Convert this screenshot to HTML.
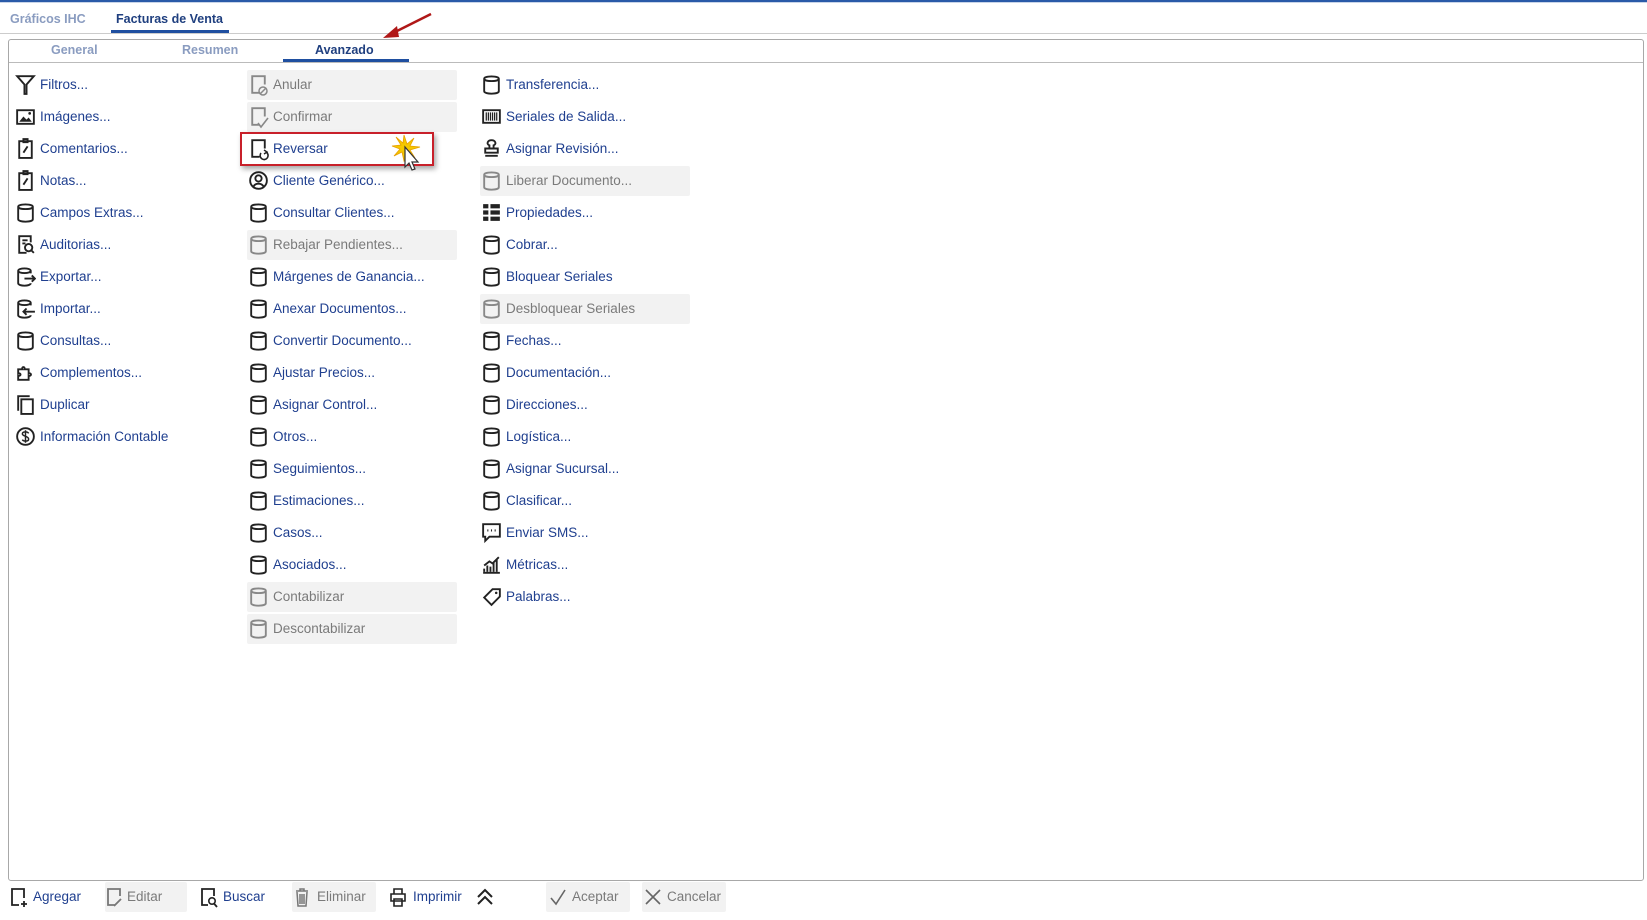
<!DOCTYPE html>
<html><head><meta charset="utf-8"><style>
*{margin:0;padding:0;box-sizing:border-box}
body{width:1647px;height:920px;background:#fff;position:relative;overflow:hidden;font-family:"Liberation Sans",sans-serif}
.a{position:absolute}
.t{position:absolute;font-size:13.5px;color:#1f3f8f;white-space:nowrap;line-height:30px;height:30px}
.d{color:#7a7a7a}
.bx{position:absolute;background:#f2f2f2;height:30px;border-radius:2px}
.ic{position:absolute;width:21px;height:23px}
.tab{position:absolute;font-size:12.5px;font-weight:bold;white-space:nowrap}
</style></head><body>
<svg width="0" height="0" style="position:absolute">
<defs>
<symbol id="db" viewBox="0 0 20 22"><path d="M3 5.5C3 2.5 17 2.5 17 5.5V17.5C17 20.5 3 20.5 3 17.5Z M3 5.5C3 8.5 17 8.5 17 5.5" fill="none" stroke="currentColor" stroke-width="1.8"/></symbol>
</defs></svg>
<div class="a" style="left:0;top:0;width:1647px;height:2px;background:#2a5aa8"></div>
<div class="a" style="left:0;top:2px;width:1647px;height:1px;background:#c8d4e8"></div>
<div class="tab" style="left:10px;top:12px;color:#8a9cc0">Gráficos IHC</div>
<div class="tab" style="left:116px;top:12px;color:#1f3f7f">Facturas de Venta</div>
<div class="a" style="left:111px;top:30px;width:118px;height:3px;background:#1f4fa0"></div>
<div class="a" style="left:0;top:33px;width:1647px;height:1px;background:#ccc"></div>
<svg class="a" style="left:375px;top:10px" width="65" height="35"><path d="M56 4L16 24" stroke="#b01818" stroke-width="2.5"/><path d="M8 28L22 16L24 27Z" fill="#b01818"/></svg>
<div class="a" style="left:8px;top:39px;width:1636px;height:842px;border:1px solid #a8a8a8;border-radius:3px"></div>
<div class="tab" style="left:51px;top:43px;color:#8a9cc0">General</div>
<div class="tab" style="left:182px;top:43px;color:#8a9cc0">Resumen</div>
<div class="tab" style="left:315px;top:43px;color:#1f3f7f">Avanzado</div>
<div class="a" style="left:9px;top:62px;width:1634px;height:1px;background:#bbb"></div>
<div class="a" style="left:283px;top:59px;width:126px;height:3px;background:#1f4fa0"></div>
<div id="rows"></div>
<div class="a" style="left:240px;top:132px;width:194px;height:34px;border:2px solid #c8202a;box-shadow:2px 3px 5px rgba(0,0,0,.35)"></div>
<svg class="a" style="left:390px;top:132px" width="40" height="40"><path d="M14 3L17 12L24 6L20 14L30 15L20 18L25 26L17 20L14 29L12 20L4 24L10 17L2 14L11 13L6 5L13 11Z" fill="#f5c800" stroke="#e8a000" stroke-width=".8"/><path d="M15 15L15 35L19 31L22 38L25 37L22 30L28 30Z" fill="#fff" stroke="#333" stroke-width="1.2"/></svg>
<div class="bx" style="left:105px;top:882px;width:82px"></div>
<div class="bx" style="left:292px;top:882px;width:84px"></div>
<div class="bx" style="left:546px;top:882px;width:84px"></div>
<div class="bx" style="left:642px;top:882px;width:84px"></div>
<svg class="ic" style="left:8px;top:886px"><path d="M11 19H4V3H16V12M13 18H19M16 15V21" fill="none" stroke="#222" stroke-width="1.8"/></svg>
<div class="t" style="left:33px;top:882px">Agregar</div>
<svg class="ic" style="left:104px;top:886px"><path d="M11 19H4V3H16V10M10 20L17 13" fill="none" stroke="#777" stroke-width="1.8"/></svg>
<div class="t d" style="left:127px;top:882px">Editar</div>
<svg class="ic" style="left:198px;top:886px"><path d="M10 19H4V3H16V10" fill="none" stroke="#222" stroke-width="1.8"/><circle cx="14" cy="15" r="3.2" fill="none" stroke="#222" stroke-width="1.6"/><path d="M16 17.5L19 21" stroke="#222" stroke-width="1.8"/></svg>
<div class="t" style="left:223px;top:882px">Buscar</div>
<svg class="ic" style="left:292px;top:886px"><path d="M4 5H16M8 5V3H12V5M5 6L6 20H14L15 6M8 8V18M10 8V18M12 8V18" fill="none" stroke="#777" stroke-width="1.5"/></svg>
<div class="t d" style="left:317px;top:882px">Eliminar</div>
<svg class="ic" style="left:388px;top:886px"><path d="M6 8V3H14V8M3 8H17V15H3ZM6 13H14V20H6Z" fill="none" stroke="#222" stroke-width="1.6"/></svg>
<div class="t" style="left:413px;top:882px">Imprimir</div>
<svg class="ic" style="left:475px;top:886px"><path d="M3 11L10 4L17 11M3 18L10 11L17 18" fill="none" stroke="#222" stroke-width="2"/></svg>
<svg class="ic" style="left:548px;top:886px"><path d="M3 12L8 18L17 4" fill="none" stroke="#666" stroke-width="1.6"/></svg>
<div class="t d" style="left:572px;top:882px">Aceptar</div>
<svg class="ic" style="left:643px;top:886px"><path d="M3 4L17 18M17 4L3 18" fill="none" stroke="#666" stroke-width="1.6"/></svg>
<div class="t d" style="left:667px;top:882px">Cancelar</div>
<script>
var c1=["Filtros...","Imágenes...","Comentarios...","Notas...","Campos Extras...","Auditorias...","Exportar...","Importar...","Consultas...","Complementos...","Duplicar","Información Contable"];
var c2=[["Anular",1,"doc"],["Confirmar",1,"doc"],["Reversar",0,"doc"],["Cliente Genérico...",0,"user"],["Consultar Clientes..."],["Rebajar Pendientes...",1],["Márgenes de Ganancia..."],["Anexar Documentos..."],["Convertir Documento..."],["Ajustar Precios..."],["Asignar Control..."],["Otros..."],["Seguimientos..."],["Estimaciones..."],["Casos..."],["Asociados..."],["Contabilizar",1],["Descontabilizar",1]];
var c3=[["Transferencia..."],["Seriales de Salida...",0,"bar"],["Asignar Revisión...",0,"stamp"],["Liberar Documento...",1],["Propiedades...",0,"grid"],["Cobrar..."],["Bloquear Seriales"],["Desbloquear Seriales",1],["Fechas..."],["Documentación..."],["Direcciones..."],["Logística..."],["Asignar Sucursal..."],["Clasificar..."],["Enviar SMS...",0,"sms"],["Métricas...",0,"chart"],["Palabras...",0,"tag"]];
var icons1=["filter","img","clip","clip","db","aud","exp","imp","db","puz","dup","dol"];
function svg(k,col){
 var s='stroke="'+col+'" stroke-width="1.8" fill="none"';
 var p={
 db:'<use href="#db" style="color:'+col+'"/>',
 doc:'<path d="M11 19H4V3H16V11" '+s+'/>',
 filter:'<path d="M2 3H18L11 11V20H9V11Z" '+s+'/>',
 img:'<rect x="2" y="5" width="16" height="13" '+s+'/><path d="M4 16L8 11L11 14L13 12L16 16Z" fill="'+col+'"/><circle cx="14" cy="8" r="1.3" fill="'+col+'"/>',
 clip:'<path d="M4 4H16V20H4Z M8 2H12V5H8Z M8 15L12 9" '+s+'/>',
 aud:'<path d="M11 19H4V3H15V9 M7 7H12 M7 10H10" '+s+'/><circle cx="13" cy="14" r="3.5" '+s+'/><path d="M15.5 16.5L18 19" '+s+'/>',
 exp:'<path d="M15 8V5.5C15 2.5 3 2.5 3 5.5V17.5C3 20.5 15 20.5 15 17.5 M3 5.5C3 8.5 15 8.5 15 5.5 M9 13H19M16 10L19 13L16 16" '+s+'/>',
 imp:'<path d="M15 8V5.5C15 2.5 3 2.5 3 5.5V17.5C3 20.5 15 20.5 15 17.5 M3 5.5C3 8.5 15 8.5 15 5.5 M8 14H19M11 11L8 14L11 17" '+s+'/>',
 puz:'<path d="M3 8H7C6 5 10 5 9 8H13V12C16 11 16 15 13 14V18H3V14C6 15 6 11 3 12Z" '+s+'/>',
 dup:'<path d="M3 17V3H14 M6 6H17V20H6Z" '+s+'/>',
 dol:'<circle cx="10" cy="11" r="8" '+s+'/><path d="M13 8C12 6 7 6 7 8.5C7 11 13 10.5 13 13.5C13 16 8 16 7 14 M10 5V17" stroke="'+col+'" stroke-width="1.4" fill="none"/>',
 user:'<circle cx="10" cy="11" r="8" '+s+'/><circle cx="10" cy="9" r="3" '+s+'/><path d="M5 17C7 13 13 13 15 17" '+s+'/>',
 bar:'<path d="M2 5H18V17H2Z" '+s+'/><path d="M5 7V15M7 7V15M9 7V15M11 7V15M13 7V15M15 7V15" stroke="'+col+'" stroke-width="1.2"/>',
 stamp:'<path d="M8 11V8C5 7 6 3 10 3C14 3 15 7 12 8V11 M4 11H16V15H4Z M4 18H16" '+s+'/>',
 grid:'<path d="M2 3H7V7H2ZM9 3H18V7H9ZM2 9H7V13H2ZM9 9H18V13H9ZM2 15H7V19H2ZM9 15H18V19H9Z" fill="'+col+'"/>',
 sms:'<path d="M2 3H18V15H8L4 19V15H2Z" '+s+'/><path d="M6 9H7M9.5 9H10.5M13 9H14" stroke="'+col+'" stroke-width="2"/>',
 chart:'<path d="M2 19H18" '+s+'/><path d="M3 18V15M6 18V12M9 18V13M12 18V9M15 18V6M3 12L8 8L11 10L17 4" stroke="'+col+'" stroke-width="1.8" fill="none"/>',
 tag:'<path d="M3 12L11 4H18V11L10 19Z" '+s+'/><circle cx="14.5" cy="7.5" r="1.2" fill="'+col+'"/>'
 };
 return p[k]||p.db;
}
var h='';
function row(x,y,txt,dis,ic,box){
 var col=dis?'#888':'#222';
 if(dis&&box) h+='<div class="bx" style="left:'+box+'px;top:'+(y-15)+'px;width:210px"></div>';
 h+='<svg class="ic" viewBox="0 0 20 22" style="left:'+x+'px;top:'+(y-12)+'px">'+svg(ic,col)+'</svg>';
 h+='<div class="t'+(dis?' d':'')+'" style="left:'+(x+25)+'px;top:'+(y-15)+'px">'+txt+'</div>';
}
c1.forEach(function(t,i){row(15,85+32*i,t,0,icons1[i]);});
c2.forEach(function(r,i){var y=85+32*i;row(248,y,r[0],r[1],r[2]||'db',247);
 if(r[0]=="Anular")h+='<svg class="a" style="left:258px;top:'+(y+1)+'px" width="10" height="10"><circle cx="5" cy="5" r="4" fill="none" stroke="#888" stroke-width="1.5"/><path d="M2 8L8 2" stroke="#888" stroke-width="1.5"/></svg>';
 if(r[0]=="Confirmar")h+='<svg class="a" style="left:257px;top:'+(y)+'px" width="12" height="12"><path d="M1 6L4 10L11 1" fill="none" stroke="#888" stroke-width="1.6"/></svg>';
 if(r[0]=="Reversar")h+='<svg class="a" style="left:258px;top:'+(y)+'px" width="12" height="12"><path d="M3 4A4 4 0 1 0 8 3" fill="none" stroke="#222" stroke-width="1.6"/><path d="M6 1L9 3L6 5" fill="none" stroke="#222" stroke-width="1.4"/></svg>';
});
c3.forEach(function(r,i){row(481,85+32*i,r[0],r[1],r[2]||'db',480);});
document.getElementById('rows').innerHTML=h;
</script>
</body></html>
